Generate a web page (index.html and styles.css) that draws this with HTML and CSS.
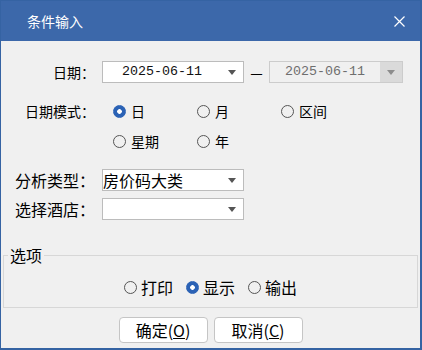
FILE: index.html
```html
<!DOCTYPE html>
<html lang="zh-CN">
<head>
    <meta charset="UTF-8">
    <title>条件输入</title>
    <link rel="stylesheet" href="styles.css">
</head>
<body>
    <div class="window">
        <div class="titlebar">
            <span class="title">条件输入</span>
            <svg class="close" width="11" height="11" viewBox="0 0 11 11">
                <path d="M0.5 0.5 L10.5 10.5 M10.5 0.5 L0.5 10.5" stroke="#fff" stroke-width="1.2" fill="none"/>
            </svg>
        </div>

        <div class="content">
            <div class="row row-date">
                <label class="label">日期：</label>
                <div class="combo">
                    <span class="combo-text mono">2025-06-11</span>
                    <span class="combo-btn"><i class="arrow"></i></span>
                </div>
                <span class="dash">—</span>
                <div class="combo combo-disabled">
                    <span class="combo-text mono">2025-06-11</span>
                    <span class="combo-btn"><i class="arrow"></i></span>
                </div>
            </div>

            <div class="row row-mode">
                <label class="label">日期模式：</label>
                <div class="radio-grid">
                    <span class="radio"><i class="dot on"></i>日</span>
                    <span class="radio"><i class="dot"></i>月</span>
                    <span class="radio"><i class="dot"></i>区间</span>
                    <span class="radio"><i class="dot"></i>星期</span>
                    <span class="radio"><i class="dot"></i>年</span>
                </div>
            </div>

            <div class="row row-select">
                <label class="label label-lg">分析类型：</label>
                <div class="combo">
                    <span class="combo-text combo-left">房价码大类</span>
                    <span class="combo-btn"><i class="arrow"></i></span>
                </div>
            </div>

            <div class="row row-select row-tight">
                <label class="label label-lg">选择酒店：</label>
                <div class="combo">
                    <span class="combo-text combo-left"></span>
                    <span class="combo-btn"><i class="arrow"></i></span>
                </div>
            </div>

            <fieldset class="group">
                <legend>选项</legend>
                <div class="options">
                    <span class="radio radio-lg"><i class="dot"></i>打印</span>
                    <span class="radio radio-lg"><i class="dot on"></i>显示</span>
                    <span class="radio radio-lg"><i class="dot"></i>输出</span>
                </div>
            </fieldset>

            <div class="buttons">
                <button class="btn">确定(<u>O</u>)</button>
                <button class="btn">取消(<u>C</u>)</button>
            </div>
        </div>
    </div>
</body>
</html>
```

FILE: styles.css
```css
* {
    margin: 0;
    padding: 0;
    box-sizing: border-box;
}

body {
    font-family: "Noto Sans CJK SC", "Noto Sans", sans-serif;
    background: #f0f0f0;
    color: #000;
}

.window {
    width: 422px;
    height: 350px;
    border: 1px solid #3563a3;
    border-right-width: 2px;
    border-bottom-width: 2px;
    background: #f0f0f0;
    display: flex;
    flex-direction: column;
}

.titlebar {
    height: 40px;
    background: #3c68aa;
    color: #fff;
    display: flex;
    align-items: center;
    justify-content: space-between;
    padding: 0 15px 0 26px;
}

.title {
    font-size: 14px;
}

.content {
    padding-top: 20px;
}

.row {
    display: flex;
    align-items: center;
}

.label {
    width: 94px;
    margin-right: 7px;
    text-align: right;
    font-size: 14px;
    flex-shrink: 0;
}

.label-lg {
    font-size: 16px;
}

.row-date,
.row-select {
    height: 22px;
}

.row-mode {
    margin-top: 13px;
    align-items: flex-start;
}

.row-mode .label {
    line-height: 30px;
}

.row-select {
    margin-top: 13px;
}

.row-tight {
    margin-top: 7px;
}

/* combo boxes */
.combo {
    width: 142px;
    height: 22px;
    border: 1px solid #bcbcbc;
    background: #fff;
    display: flex;
    align-items: center;
}

.combo-text {
    flex: 1;
    text-align: center;
    font-size: 16px;
    line-height: 20px;
    white-space: nowrap;
}

.mono {
    font-family: "Liberation Mono", monospace;
    font-size: 13.33px;
    color: #111;
}

.combo-left {
    text-align: left;
}

.combo-btn {
    width: 22px;
    height: 100%;
    display: flex;
    align-items: center;
    justify-content: center;
}

.arrow {
    width: 0;
    height: 0;
    border-left: 4px solid transparent;
    border-right: 4px solid transparent;
    border-top: 5px solid #555;
}

.dash {
    width: 25px;
    text-align: center;
    font-size: 14px;
    line-height: 22px;
}

.combo-disabled {
    width: 134px;
    background: #f0f0f0;
    border-color: #cccccc;
}

.combo-disabled .mono {
    color: #6e6e6e;
}

.combo-disabled .combo-btn {
    background: #dadada;
}

.combo-disabled .arrow {
    border-top-color: #8c8c8c;
}

/* radios */
.radio-grid {
    display: grid;
    grid-template-columns: repeat(3, 84px);
    grid-auto-rows: 30px;
    margin-left: 11px;
}

.radio {
    display: flex;
    align-items: center;
    gap: 5px;
    font-size: 14px;
}

.dot {
    width: 13px;
    height: 13px;
    border: 1px solid #555;
    border-radius: 50%;
    flex-shrink: 0;
}

.dot.on {
    border-color: #2b62b5;
    background: radial-gradient(circle, #fff 0 2px, #2b62b5 2.6px);
}

.radio-lg {
    font-size: 16px;
    gap: 4px;
}

/* options group */
.group {
    margin: 25px 2px 0 2px;
    border: 1px solid #d7d7d7;
    padding: 10px 0 8px;
}

.group legend {
    font-size: 16px;
    line-height: 20px;
    margin-left: 4px;
    padding: 0 2px;
}

.options {
    display: flex;
    justify-content: center;
    align-items: center;
    gap: 13px;
    height: 24px;
}

/* buttons */
.buttons {
    display: flex;
    justify-content: center;
    gap: 6px;
    margin-top: 9px;
}

.btn {
    width: 89px;
    height: 26px;
    border: 1px solid #c5c5c5;
    border-radius: 4px;
    background: #fff;
    font-family: "Noto Sans CJK SC", "Noto Sans", sans-serif;
    font-size: 16px;
    color: #000;
}
```
